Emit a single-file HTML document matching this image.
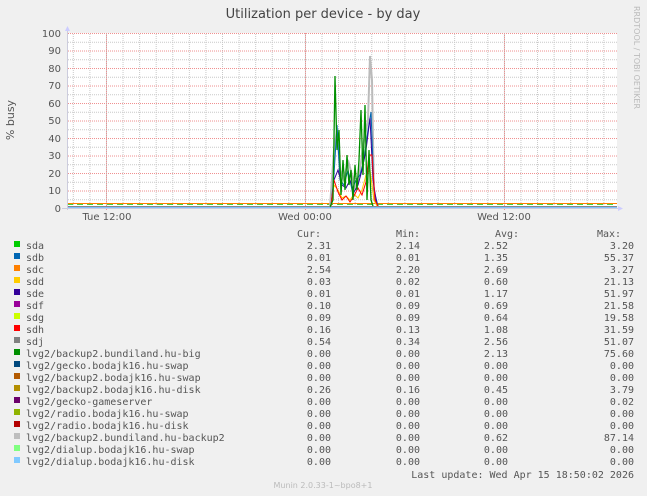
<!DOCTYPE html>
<html><head><meta charset="utf-8"><style>
body{margin:0;background:#f0f0f0;}
svg{display:block}
text{font-family:"DejaVu Sans Mono","Liberation Mono",monospace;font-size:10px;fill:#555;}
.s{font-family:"DejaVu Sans","Liberation Sans",sans-serif;}
</style></head><body>
<svg width="647" height="496" viewBox="0 0 647 496" xmlns="http://www.w3.org/2000/svg">
<defs>
<pattern id="vx" x="72.8" y="0" width="16.58" height="2" patternUnits="userSpaceOnUse"><rect x="0" y="0" width="1" height="1" fill="#c8c8c8"/></pattern>
<pattern id="hy" x="0" y="33" width="2" height="8.75" patternUnits="userSpaceOnUse"><rect x="0" y="0" width="1" height="1" fill="#c8c8c8"/></pattern>
<pattern id="hr" x="0" y="33" width="2" height="17.5" patternUnits="userSpaceOnUse"><rect x="0" y="0" width="1" height="1" fill="#f09090"/></pattern>
</defs>
<rect x="67" y="33" width="550" height="175" fill="#fff"/>
<rect x="67" y="33" width="550" height="176" fill="url(#vx)"/>
<rect x="67" y="33" width="550" height="176" fill="url(#hy)"/>
<rect x="67" y="33" width="550" height="176" fill="url(#hr)"/>
<g stroke="#f09090" stroke-dasharray="1,1" stroke-width="1">
<line x1="106.5" y1="33" x2="106.5" y2="210"/><line x1="305.5" y1="33" x2="305.5" y2="210"/><line x1="504.5" y1="33" x2="504.5" y2="210"/>
</g>
<text class="s" x="323" y="18" text-anchor="middle" style="font-size:13px;fill:#444">Utilization per device - by day</text>
<text class="s" transform="translate(14,120) rotate(-90)" text-anchor="middle" style="font-size:11px">% busy</text>
<text class="s" transform="translate(634,6) rotate(90)" style="font-size:8px;fill:#bbb">RRDTOOL / TOBI OETIKER</text>
<g class="s" text-anchor="end" style="font-size:10px">
<text class="s" x="61" y="37">100</text><text class="s" x="61" y="54">90</text><text class="s" x="61" y="72">80</text><text class="s" x="61" y="89">70</text><text class="s" x="61" y="107">60</text><text class="s" x="61" y="124">50</text><text class="s" x="61" y="142">40</text><text class="s" x="61" y="159">30</text><text class="s" x="61" y="177">20</text><text class="s" x="61" y="194">10</text><text class="s" x="61" y="212">0</text>
</g>
<text class="s" x="107" y="220" text-anchor="middle">Tue 12:00</text>
<text class="s" x="305" y="220" text-anchor="middle">Wed 00:00</text>
<text class="s" x="504" y="220" text-anchor="middle">Wed 12:00</text>
<polyline fill="none" stroke="#00cc00" stroke-width="1.5" stroke-dasharray="6,4" points="67,204 330,204 380,204 617,204"/>
<polyline fill="none" stroke="#ff7f00" stroke-width="1" points="67,203.5 617,203.5"/>
<line x1="67" y1="206.5" x2="617" y2="206.5" stroke="#888" stroke-width="1"/>
<line x1="67" y1="207.5" x2="617" y2="207.5" stroke="#7fc0ff" stroke-width="1"/>
<polyline fill="none" stroke="#bbb" stroke-width="2" points="330,207 334,150 337,130 340,170 344,180 348,160 352,175 356,190 360,170 364,140 368,120 370,56 372,80 374,200 378,206"/>
<polyline fill="none" stroke="#0066b3" stroke-width="1" points="331,206 334,175 337,125 340,180 344,185 348,170 352,190 356,180 360,175 364,160 368,130 371,112 374,190 378,206"/>
<polyline fill="none" stroke="#330099" stroke-width="1" points="331,206 334,180 338,170 342,185 346,188 350,180 354,192 358,185 362,170 366,150 370,118 373,180 377,206"/>
<polyline fill="none" stroke="#ffcc00" stroke-width="1" points="331,206 334,185 338,190 342,198 346,196 350,200 354,194 358,198 362,190 366,175 370,170 374,200 377,206"/>
<polyline fill="none" stroke="#ff0000" stroke-width="1" points="331,206 334,180 338,192 342,200 346,196 350,202 354,196 358,188 362,195 366,182 369,155 372,155 375,200 378,206"/>
<polyline fill="none" stroke="#008f00" stroke-width="1.3" points="330,207 333,200 335,76 337,150 339,130 341,195 343,160 345,190 347,155 349,185 351,170 353,200 355,165 357,190 359,160 361,110 363,175 365,105 367,200 369,150 371,200 373,206"/>
<line x1="67.5" y1="28" x2="67.5" y2="210" stroke="#ccd"/>
<line x1="62" y1="208.5" x2="622" y2="208.5" stroke="#ccd"/>
<path d="M65 31 L67.5 26 L70 31Z M618 206 L623 208.5 L618 211Z" fill="#ccf"/>
<g>
<text x="297" y="237">Cur:</text><text x="396" y="237">Min:</text><text x="495" y="237">Avg:</text><text x="597" y="237">Max:</text>
</g>
<g>
<rect x="14" y="241" width="6" height="6" fill="#00cc00"/>
<rect x="14" y="253" width="6" height="6" fill="#0066b3"/>
<rect x="14" y="265" width="6" height="6" fill="#ff8000"/>
<rect x="14" y="277" width="6" height="6" fill="#ffcc00"/>
<rect x="14" y="289" width="6" height="6" fill="#330099"/>
<rect x="14" y="301" width="6" height="6" fill="#990099"/>
<rect x="14" y="313" width="6" height="6" fill="#ccff00"/>
<rect x="14" y="325" width="6" height="6" fill="#ff0000"/>
<rect x="14" y="337" width="6" height="6" fill="#808080"/>
<rect x="14" y="349" width="6" height="6" fill="#008f00"/>
<rect x="14" y="361" width="6" height="6" fill="#00487d"/>
<rect x="14" y="373" width="6" height="6" fill="#b35a00"/>
<rect x="14" y="385" width="6" height="6" fill="#b38f00"/>
<rect x="14" y="397" width="6" height="6" fill="#6b006b"/>
<rect x="14" y="409" width="6" height="6" fill="#8fb300"/>
<rect x="14" y="421" width="6" height="6" fill="#b30000"/>
<rect x="14" y="433" width="6" height="6" fill="#bebebe"/>
<rect x="14" y="445" width="6" height="6" fill="#80ff80"/>
<rect x="14" y="457" width="6" height="6" fill="#80c9ff"/>
</g>
<g>
<text x="26" y="249">sda</text><text x="26" y="261">sdb</text><text x="26" y="273">sdc</text><text x="26" y="285">sdd</text><text x="26" y="297">sde</text><text x="26" y="309">sdf</text><text x="26" y="321">sdg</text><text x="26" y="333">sdh</text><text x="26" y="345">sdj</text>
<text x="26" y="357">lvg2/backup2.bundiland.hu-big</text>
<text x="26" y="369">lvg2/gecko.bodajk16.hu-swap</text>
<text x="26" y="381">lvg2/backup2.bodajk16.hu-swap</text>
<text x="26" y="393">lvg2/backup2.bodajk16.hu-disk</text>
<text x="26" y="405">lvg2/gecko-gameserver</text>
<text x="26" y="417">lvg2/radio.bodajk16.hu-swap</text>
<text x="26" y="429">lvg2/radio.bodajk16.hu-disk</text>
<text x="26" y="441">lvg2/backup2.bundiland.hu-backup2</text>
<text x="26" y="453">lvg2/dialup.bodajk16.hu-swap</text>
<text x="26" y="465">lvg2/dialup.bodajk16.hu-disk</text>
</g>
<g text-anchor="end">
<text x="331" y="249">2.31</text><text x="420" y="249">2.14</text><text x="508" y="249">2.52</text><text x="634" y="249">3.20</text>
<text x="331" y="261">0.01</text><text x="420" y="261">0.01</text><text x="508" y="261">1.35</text><text x="634" y="261">55.37</text>
<text x="331" y="273">2.54</text><text x="420" y="273">2.20</text><text x="508" y="273">2.69</text><text x="634" y="273">3.27</text>
<text x="331" y="285">0.03</text><text x="420" y="285">0.02</text><text x="508" y="285">0.60</text><text x="634" y="285">21.13</text>
<text x="331" y="297">0.01</text><text x="420" y="297">0.01</text><text x="508" y="297">1.17</text><text x="634" y="297">51.97</text>
<text x="331" y="309">0.10</text><text x="420" y="309">0.09</text><text x="508" y="309">0.69</text><text x="634" y="309">21.58</text>
<text x="331" y="321">0.09</text><text x="420" y="321">0.09</text><text x="508" y="321">0.64</text><text x="634" y="321">19.58</text>
<text x="331" y="333">0.16</text><text x="420" y="333">0.13</text><text x="508" y="333">1.08</text><text x="634" y="333">31.59</text>
<text x="331" y="345">0.54</text><text x="420" y="345">0.34</text><text x="508" y="345">2.56</text><text x="634" y="345">51.07</text>
<text x="331" y="357">0.00</text><text x="420" y="357">0.00</text><text x="508" y="357">2.13</text><text x="634" y="357">75.60</text>
<text x="331" y="369">0.00</text><text x="420" y="369">0.00</text><text x="508" y="369">0.00</text><text x="634" y="369">0.00</text>
<text x="331" y="381">0.00</text><text x="420" y="381">0.00</text><text x="508" y="381">0.00</text><text x="634" y="381">0.00</text>
<text x="331" y="393">0.26</text><text x="420" y="393">0.16</text><text x="508" y="393">0.45</text><text x="634" y="393">3.79</text>
<text x="331" y="405">0.00</text><text x="420" y="405">0.00</text><text x="508" y="405">0.00</text><text x="634" y="405">0.02</text>
<text x="331" y="417">0.00</text><text x="420" y="417">0.00</text><text x="508" y="417">0.00</text><text x="634" y="417">0.00</text>
<text x="331" y="429">0.00</text><text x="420" y="429">0.00</text><text x="508" y="429">0.00</text><text x="634" y="429">0.00</text>
<text x="331" y="441">0.00</text><text x="420" y="441">0.00</text><text x="508" y="441">0.62</text><text x="634" y="441">87.14</text>
<text x="331" y="453">0.00</text><text x="420" y="453">0.00</text><text x="508" y="453">0.00</text><text x="634" y="453">0.00</text>
<text x="331" y="465">0.00</text><text x="420" y="465">0.00</text><text x="508" y="465">0.00</text><text x="634" y="465">0.00</text>
<text x="634" y="478">Last update: Wed Apr 15 18:50:02 2026</text>
</g>
<text class="s" x="323" y="488" text-anchor="middle" style="font-size:8px;fill:#bbb">Munin 2.0.33-1~bpo8+1</text>
</svg>
</body></html>
